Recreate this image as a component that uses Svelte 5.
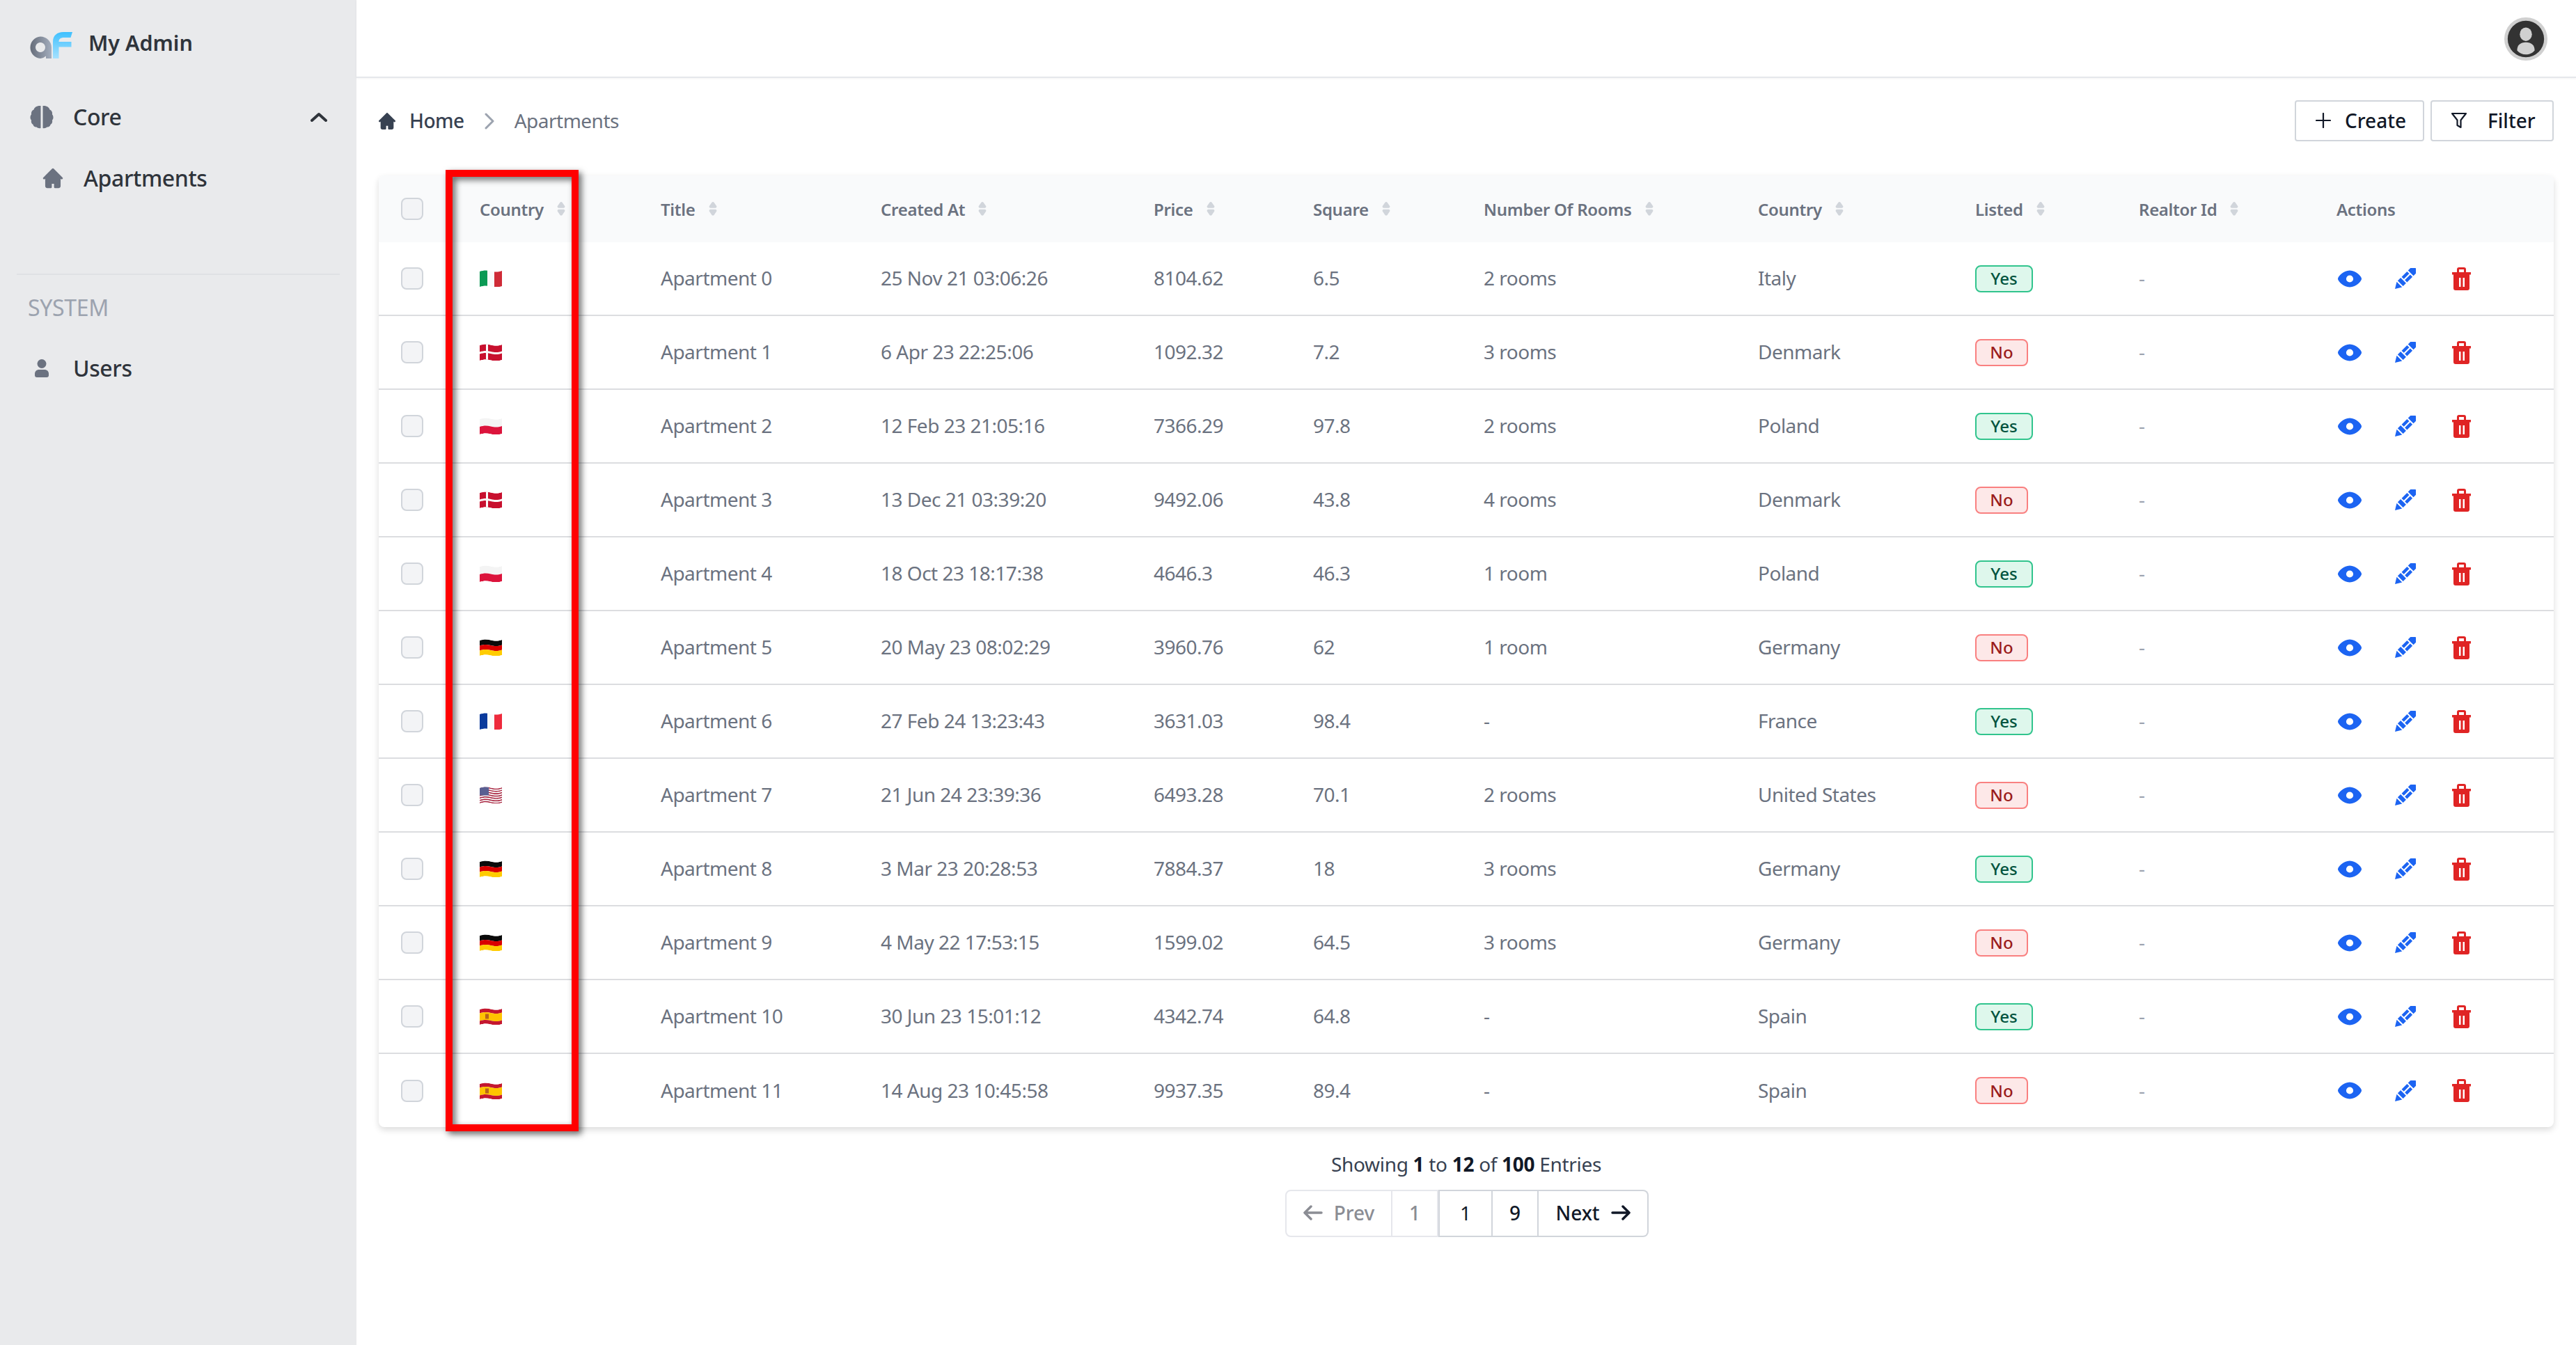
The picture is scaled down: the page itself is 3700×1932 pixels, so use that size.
<script>
  const rows = [
    ['it','Apartment 0','25 Nov 21 03:06:26','8104.62','6.5','2 rooms','Italy'],
    ['dk','Apartment 1','6 Apr 23 22:25:06','1092.32','7.2','3 rooms','Denmark'],
    ['pl','Apartment 2','12 Feb 23 21:05:16','7366.29','97.8','2 rooms','Poland'],
    ['dk','Apartment 3','13 Dec 21 03:39:20','9492.06','43.8','4 rooms','Denmark'],
    ['pl','Apartment 4','18 Oct 23 18:17:38','4646.3','46.3','1 room','Poland'],
    ['de','Apartment 5','20 May 23 08:02:29','3960.76','62','1 room','Germany'],
    ['fr','Apartment 6','27 Feb 24 13:23:43','3631.03','98.4','-','France'],
    ['us','Apartment 7','21 Jun 24 23:39:36','6493.28','70.1','2 rooms','United States'],
    ['de','Apartment 8','3 Mar 23 20:28:53','7884.37','18','3 rooms','Germany'],
    ['de','Apartment 9','4 May 22 17:53:15','1599.02','64.5','3 rooms','Germany'],
    ['es','Apartment 10','30 Jun 23 15:01:12','4342.74','64.8','-','Spain'],
    ['es','Apartment 11','14 Aug 23 10:45:58','9937.35','89.4','-','Spain']
  ];
  const heads = ['Country','Title','Created At','Price','Square','Number Of Rooms','Country','Listed','Realtor Id'];
  const home = 'M11.293 3.293a1 1 0 0 1 1.414 0l6 6 2 2a1 1 0 0 1-1.414 1.414L19 12.414V19a2 2 0 0 1-2 2h-3a1 1 0 0 1-1-1v-3h-2v3a1 1 0 0 1-1 1H7a2 2 0 0 1-2-2v-6.586l-.293.293a1 1 0 0 1-1.414-1.414l2-2 6-6Z';
  const eye = 'M4.998 7.78C6.729 6.345 9.198 5 12 5c2.802 0 5.27 1.345 7.002 2.78a12.713 12.713 0 0 1 2.096 2.183c.253.344.465.682.618.997.14.286.284.658.284 1.04s-.145.754-.284 1.04a6.6 6.6 0 0 1-.618.997 12.712 12.712 0 0 1-2.096 2.183C17.271 17.655 14.802 19 12 19c-2.802 0-5.27-1.345-7.002-2.78a12.712 12.712 0 0 1-2.096-2.183 6.6 6.6 0 0 1-.618-.997C2.144 12.754 2 12.382 2 12s.145-.754.284-1.04c.153-.315.365-.653.618-.997A12.714 12.714 0 0 1 4.998 7.78ZM12 15a3 3 0 1 0 0-6 3 3 0 0 0 0 6Z';
  const sort = 'M8.574 11.024h6.852a2.075 2.075 0 0 0 1.847-1.086 1.9 1.9 0 0 0-.11-1.986L13.736 2.9a2.122 2.122 0 0 0-3.472 0L6.837 7.952a1.9 1.9 0 0 0-.11 1.986 2.074 2.074 0 0 0 1.847 1.086Zm6.852 1.952H8.574a2.072 2.072 0 0 0-1.847 1.087 1.9 1.9 0 0 0 .11 1.985l3.426 5.05a2.123 2.123 0 0 0 3.472 0l3.427-5.05a1.9 1.9 0 0 0 .11-1.985 2.074 2.074 0 0 0-1.846-1.087Z';
  // A stripe of a waving flag between two heights.
  function band(a, b) {
    const f = (y) => `C6 ${y-1} 10 ${y-1} 16 ${y+.5} S26 ${y+2} 32 ${y}`;
    const r = (y) => `C26 ${y+2} 22 ${y+2} 16 ${y+.5} S6 ${y-1} 0 ${y+1}`;
    return `M0 ${a+1} ${f(a)} V${b} ${r(b)} Z`;
  }
  const usStripes = [0,1,2,3,4,5,6,7,8,9,10,11,12];
</script>

{#snippet flag(c, id)}
  <svg class="flag" viewBox="0 0 32 24" aria-hidden="true">
    <clipPath id={id}><path d={band(1, 23)} /></clipPath>
    <g clip-path={`url(#${id})`}>
      {#if c === 'it'}
        <rect width="11" height="24" fill="#0a9a54"/><rect x="11" width="10" height="24" fill="#fafafa"/><rect x="21" width="11" height="24" fill="#cf2b37"/>
      {:else if c === 'fr'}
        <rect width="11" height="24" fill="#0a3a9c"/><rect x="11" width="10" height="24" fill="#fafafa"/><rect x="21" width="11" height="24" fill="#ee2a3c"/>
      {:else if c === 'dk'}
        <path d={band(1, 23)} fill="#c8102e"/>
        <path d={band(10.5, 13.5)} fill="#fafafa"/>
        <rect x="9" width="3" height="24" fill="#fafafa"/>
      {:else if c === 'pl'}
        <path d={band(1, 12)} fill="#f4f4f4"/>
        <path d={band(12, 23)} fill="#dc143c"/>
      {:else if c === 'de'}
        <path d={band(1, 8.5)} fill="#0a0a0a"/>
        <path d={band(8.5, 15.5)} fill="#d90000"/>
        <path d={band(15.5, 23)} fill="#ffcc00"/>
      {:else if c === 'es'}
        <path d={band(1, 6.5)} fill="#c4172f"/>
        <path d={band(6.5, 17.5)} fill="#ffc400"/>
        <path d={band(17.5, 23)} fill="#c4172f"/>
        <rect x="8" y="8.5" width="5" height="7" fill="#b8651b"/>
      {:else}
        {#each usStripes as s}
          <path d={band(1 + s * 1.7, 2.7 + s * 1.7)} fill={s % 2 ? '#f8f8f8' : '#a8233f'}/>
        {/each}
        <rect width="13" height="12.5" fill="#5a5f92"/>
      {/if}
    </g>
  </svg>
{/snippet}

<div class="page">
  <aside class="side">
    <div class="brand">
      <svg class="logo" viewBox="0 0 62 38" aria-hidden="true">
        <defs>
          <linearGradient id="ga" x1="0" x2="1"><stop offset="0" stop-color="#666d7a"/><stop offset="1" stop-color="#a3adbd"/></linearGradient>
          <linearGradient id="gf" x1="0" x2="0" y1="0" y2="1"><stop offset="0" stop-color="#3fc0fe"/><stop offset="1" stop-color="#a6e1fe"/></linearGradient>
        </defs>
        <path fill="url(#ga)" fill-rule="evenodd" d="M16 6.500a16 16 0 0 1 16 15.500v16h-8v-3.500a13 13 0 0 1-8 3.500a15.800 15.800 0 0 1 0-31.500ZM16 15a7 7 0 1 0 0.010 0Z"/>
        <path fill="url(#gf)" d="M34 38V14C34 5 40 0 49 0h13l-2.500 8H50c-5 0-7.500 2-7.500 6h18v7.500H42.500V38Z"/>
      </svg>
      <span class="brandname">My Admin</span>
    </div>
    <div class="item">
      <svg class="icon34" viewBox="0 0 34 34" fill="#6b7280" aria-hidden="true">
        <path d="M15.500 1v32c-2.500.5-4.500 0-6-1.500c-2.500.3-4.500-1-5-3.500C2 26.500 1.500 24 2 21.500C0 20 0 15.500 2 13.500C1.500 10 3 7.500 5.500 6.500C6.500 3 10 .5 15.500 1Z"/>
        <path d="M18.500 1v32c2.500.5 4.500 0 6-1.500c2.500.3 4.500-1 5-3.500c2.500-1.500 3-4 2.500-6.500c2-1.500 2-6 0-8c.5-3.500-1-6-3.500-7C27.500 3 24 .5 18.500 1Z"/>
      </svg>
      <span>Core</span>
      <svg class="chev" viewBox="0 0 24 14" fill="none" stroke="#2f343b" stroke-width="4" stroke-linecap="round" stroke-linejoin="round" aria-hidden="true"><path d="M2 12 12 3l10 9"/></svg>
    </div>
    <div class="item sub">
      <svg class="homeicon" viewBox="2.500 2.500 19 19" fill="#6b7280" aria-hidden="true"><path d={home}/></svg>
      <span>Apartments</span>
    </div>
    <div class="divider"></div>
    <div class="label">SYSTEM</div>
    <div class="item">
      <span class="iconbox">
        <svg class="usericon" viewBox="0 0 20 26" fill="#6b7280" aria-hidden="true"><circle cx="10" cy="6.500" r="6.500"/><path d="M0 23v-2c0-4 3-6 6-6h8c3 0 6 2 6 6v2c0 2-1 3-3 3H3c-2 0-3-1-3-3Z"/></svg>
      </span>
      <span>Users</span>
    </div>
  </aside>

  <main class="main">
    <header class="top">
      <svg class="avatar" viewBox="0 0 64 64" aria-hidden="true">
        <circle cx="32" cy="32" r="32" fill="#d0d0d0"/>
        <circle cx="32" cy="32" r="27" fill="#333"/>
        <ellipse cx="32" cy="25" rx="9" ry="10" fill="#d0d0d0"/>
        <path d="M19 49c0-8 5-12 13-12s13 4 13 12c-3 4-8 6-13 6s-10-2-13-6Z" fill="#d0d0d0"/>
      </svg>
    </header>

    <div class="content">
      <div class="toolbar">
        <nav class="crumbs">
          <svg class="crumbhome" viewBox="3 3 18 18" fill="#374151" aria-hidden="true"><path d={home}/></svg>
          <span class="c1">Home</span>
          <svg class="crumbchev" viewBox="0 0 14 24" fill="none" stroke="#9ca3af" stroke-width="3" stroke-linecap="round" stroke-linejoin="round" aria-hidden="true"><path d="M2 2l10 10L2 22"/></svg>
          <span class="c2">Apartments</span>
        </nav>
        <div class="actions">
          <button class="btn create">
            <svg class="plus" viewBox="0 0 22 22" fill="none" stroke="#111827" stroke-width="2.200" stroke-linecap="round" aria-hidden="true"><path d="M11 1v20M1 11h20"/></svg>
            Create
          </button>
          <button class="btn filter">
            <svg class="funnel" viewBox="0 0 24 24" fill="none" stroke="#111827" stroke-width="2.200" stroke-linejoin="round" aria-hidden="true"><path d="M2 2h20l-7.500 9.500V22l-5-3v-7.500Z"/></svg>
            Filter
          </button>
        </div>
      </div>

      <div class="tablewrap">
        <div class="table">
          <div class="row head">
            <span class="cb"><i class="check"></i></span>
            {#each heads as h}
              <span class="th">{h}<svg class="sort" viewBox="6 2 12 20.500" fill="#d1d5db" aria-hidden="true"><path d={sort}/></svg></span>
            {/each}
            <span class="th">Actions</span>
          </div>
          {#each rows as r, i}
            <div class="row body">
              <span class="cb"><i class="check"></i></span>
              <span class="td">{@render flag(r[0], `f${i}`)}</span>
              <span class="td tx">{r[1]}</span>
              <span class="td tx">{r[2]}</span>
              <span class="td tx">{r[3]}</span>
              <span class="td tx">{r[4]}</span>
              <span class="td tx">{r[5]}</span>
              <span class="td tx">{r[6]}</span>
              <span class="td"><b class={i % 2 ? 'badge no' : 'badge yes'}>{i % 2 ? 'No' : 'Yes'}</b></span>
              <span class="td tx dash">-</span>
              <span class="td acts">
                <svg class="eye" viewBox="2 5 20 14" fill="#1c64f2" fill-rule="evenodd" aria-hidden="true"><path d={eye}/></svg>
                <svg class="pen" viewBox="0 0 30 30" fill="#1c64f2" aria-hidden="true">
                  <g transform="translate(0 30) rotate(-45)">
                    <path d="M0 0 9-5.500V5.500Z"/>
                    <rect x="11" y="-5.500" width="6" height="11"/>
                    <path d="M19-5.500h11v4.500H19ZM19 1h11v4.500H19Z"/>
                    <path d="M32-5.500h5a5 5.500 0 0 1 0 11h-5Z"/>
                  </g>
                </svg>
                <svg class="trash" viewBox="0 0 27 33" fill="#e02424" fill-rule="evenodd" aria-hidden="true">
                  <path d="M7 7V3a3 3 0 0 1 3-3h7a3 3 0 0 1 3 3v4h6.500a.500.500 0 0 1 0 3.500H25V30a3 3 0 0 1-3 3H5a3 3 0 0 1-3-3V10.500H.500a.500.500 0 0 1 0-3.500ZM10 7h7V3h-7ZM10 15v13h2.500V15ZM15.500 15v13H18V15Z"/>
                </svg>
              </span>
            </div>
          {/each}
        </div>
        <div class="mark"></div>
      </div>

      <p class="showing">Showing <b>1</b> to <b>12</b> of <b>100</b> Entries</p>

      <div class="pager">
        <span class="pg prev off">
          <svg class="arrow" viewBox="0 0 28 22" fill="none" stroke="currentColor" stroke-width="3.500" stroke-linecap="round" stroke-linejoin="round" aria-hidden="true"><path d="M26 11H2M11 2l-9 9 9 9"/></svg>
          Prev
        </span>
        <span class="pg n1 off">1</span>
        <span class="pg n2">1</span>
        <span class="pg n3">9</span>
        <span class="pg next">
          Next
          <svg class="arrow" viewBox="0 0 28 22" fill="none" stroke="currentColor" stroke-width="3.500" stroke-linecap="round" stroke-linejoin="round" aria-hidden="true"><path d="M2 11h24M17 2l9 9-9 9"/></svg>
        </span>
      </div>
    </div>
  </main>
</div>

<style>
  :global(body) { margin: 0; background: #fff; }
  .page {
    display: flex; width: 3700px; height: 1932px; overflow: hidden;
    font-family: "Noto Sans", "Open Sans", sans-serif; color: #6b7280;
  }
  .side { width: 512px; flex: none; background: #e9eaec; padding: 0 24px; box-sizing: border-box; color: #2f343b; }
  .brand { height: 124px; display: flex; align-items: center; padding: 6px 0 0 18px; box-sizing: border-box; }
  .logo { width: 62px; height: 38px; margin-right: 25px; }
  .brandname { font-size: 30.500px; font-weight: 600; padding-bottom: 8px; margin-left: -2px; }
  .item { height: 88px; display: flex; align-items: center; padding-left: 19px; gap: 28px; font-size: 32px; font-weight: 500; letter-spacing: -.4px; }
  .item span { padding-bottom: 2px; }
  .icon34, .iconbox { width: 34px; height: 34px; display: flex; align-items: center; justify-content: center; flex: none; }
  .item .iconbox { padding-bottom: 0; }
  .chev { width: 24px; height: 14px; margin-left: auto; margin-right: 18px; }
  .sub { padding-left: 37px; gap: 29px; }
  .homeicon { width: 30px; height: 30px; }
  .usericon { width: 20px; height: 26px; }
  .divider { height: 2px; background: #dfe1e4; margin: 93px 0 0; }
  .label { height: 46px; margin-top: 24px; padding-left: 16px; font-size: 32px; color: #9ca3af; line-height: 46px; letter-spacing: -.3px; }
  .label + .item { margin-top: 20px; }

  .main { flex: 1; min-width: 0; }
  .top { height: 112px; box-sizing: border-box; border-bottom: 2px solid #e5e7eb; box-shadow: 0 1px 3px rgba(0,0,0,.05); display: flex; align-items: flex-start; justify-content: flex-end; padding: 24px 41px 0 0; }
  .avatar { width: 62px; height: 64px; }
  .content { padding: 32px 32px 0; }
  .toolbar { display: flex; align-items: center; justify-content: space-between; height: 59px; margin-bottom: 49px; }
  .crumbs { display: flex; align-items: center; font-size: 28px; letter-spacing: -.5px; }
  .crumbhome { width: 24px; height: 24px; margin-right: 20px; }
  .c1, .c2 { padding-bottom: 2px; }
  .c1 { color: #374151; font-weight: 500; }
  .crumbchev { width: 14px; height: 24px; margin: 0 29px 0 29px; }
  .c2 { color: #6b7280; }
  .actions { display: flex; gap: 9px; }
  .btn { height: 59px; box-sizing: border-box; background: #fff; border: 2px solid #d1d5db; border-radius: 4px; display: flex; align-items: center; font: 500 28px "Noto Sans", sans-serif; color: #111827; padding: 0 0 2px; }
  .create { width: 186px; padding-left: 28px; gap: 20px; }
  .filter { width: 177px; padding-left: 27px; gap: 29px; }
  .plus { width: 22px; height: 22px; }
  .funnel { width: 24px; height: 26px; }

  .tablewrap { position: relative; }
  .table { box-shadow: 0 4px 10px rgba(0,0,0,.14); border-radius: 8px; background: #fff; }
  .row { display: grid; grid-template-columns: 145px 260px 316px 392px 229px 245px 394px 312px 235px 284px 312px; align-items: center; }
  .head { height: 96px; background: #f9fafb; border-radius: 8px 8px 0 0; }
  .body { height: 106px; box-sizing: border-box; border-bottom: 2px solid #dcdde0; }
  .body:last-child { border-bottom: 0; height: 105px; }
  .cb { padding-left: 32px; display: flex; }
  .check { width: 32px; height: 32px; box-sizing: border-box; border: 2px solid #d1d5db; border-radius: 8px; background: #f3f4f6; }
  .th { display: flex; align-items: center; gap: 19px; font-size: 24px; font-weight: 600; letter-spacing: -.3px; color: #6b7280; white-space: nowrap; }
  .sort { width: 12px; height: 20px; }
  .td { font-size: 28px; white-space: nowrap; display: flex; align-items: center; }
  .tx { letter-spacing: -.5px; padding-bottom: 2px; }
  .flag { width: 32px; height: 24px; }
  .badge { box-sizing: border-box; height: 39px; border-radius: 8px; border: 2px solid; font-size: 24px; font-weight: 500; display: flex; align-items: center; justify-content: center; padding-bottom: 1px; }
  .yes { width: 83px; background: #def7ec; border-color: #31c48d; color: #03543f; }
  .no { width: 76px; background: #fde8e8; border-color: #f98080; color: #9b1c1c; }
  .dash { color: #9ca3af; }
  .acts { padding-left: 2px; }
  .eye { width: 34px; height: 25px; margin-right: 48px; }
  .pen { width: 30px; height: 30px; margin-right: 52px; }
  .trash { width: 27px; height: 33px; }

  .mark { position: absolute; left: 96px; top: -8px; width: 191px; height: 1381px; box-sizing: border-box; border: 10px solid #f00; filter: drop-shadow(4px 4px 5px rgba(0,0,0,.6)); }

  .showing { margin: 34px 0 0; height: 40px; line-height: 38px; text-align: center; font-size: 28px; color: #374151; letter-spacing: -.3px; }
  .showing b { color: #111827; font-weight: 700; }
  .pager { display: flex; justify-content: center; margin-top: 16px; margin-left: 2px; }
  .pg { height: 68px; box-sizing: border-box; border: 2px solid #d1d5db; border-left-width: 0; display: flex; align-items: center; justify-content: center; font-size: 28px; font-weight: 500; color: #111827; background: #fff; padding-bottom: 2px; }
  .off { color: #8b8d94; border-color: #e6e7ec; }
  .prev { width: 154px; border-left-width: 2px; border-radius: 8px 0 0 8px; gap: 16px; }
  .n1 { width: 66px; }
  .n2 { width: 78px; border-left-width: 2px; font-weight: 400; }
  .n3 { width: 66px; }
  .next { width: 158px; border-radius: 0 8px 8px 0; gap: 16px; }
  .arrow { width: 28px; height: 22px; }
</style>
